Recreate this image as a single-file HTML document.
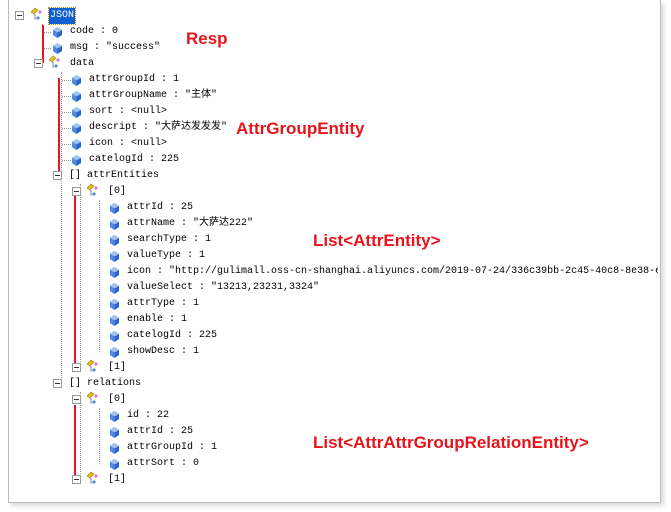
<!DOCTYPE html>
<html><head><meta charset="utf-8"><style>
body{margin:0;width:671px;height:512px;background:#fff;position:relative;overflow:hidden;font-family:"Liberation Mono","Noto Sans CJK SC",monospace;font-size:10px;color:#000}
.frame{position:absolute;left:8px;top:0;width:651px;height:502px;border:1px solid #bbb;border-top:none;box-shadow:3px 3px 4px #ddd}
.t{position:absolute;white-space:nowrap;line-height:16px;height:16px}
.ex{position:absolute;width:7px;height:7px;border:1px solid #999;background:#fff}
.ex:after{content:"";position:absolute;left:1px;top:3px;width:5px;height:1px;background:#333}
.lf{position:absolute;width:9px;height:11px}
.ob{position:absolute;width:14px;height:14px}
.vd{position:absolute;width:0;border-left:1px dotted #999}
.hd{position:absolute;height:0;border-top:1px dotted #999}
.red{position:absolute;background:#e8141c;width:2px}
.lab{position:absolute;color:#e8141c;font-family:"Liberation Sans",sans-serif;font-weight:bold;font-size:17px;white-space:nowrap}
</style></head><body>
<div class="frame"></div>
<svg width="0" height="0" style="position:absolute"><defs>
<g id="leaf"><polygon points="4.5,0 9,3 9,8 4.5,11 0,8 0,3" fill="#2a64c8"/><polygon points="4.5,0 9,3 4.5,5.5 0,3" fill="#9cc4f4"/><polygon points="0,3 4.5,5.5 4.5,11 0,8" fill="#4c8ae0"/></g>
<g id="obj"><polygon points="1,5 5,1 8,3 4,7" fill="#e8c020" stroke="#a08010" stroke-width=".6"/><polygon points="8,5 10,3 12,5 10,7" fill="#e070e0"/><polygon points="6,11 8,9 10,11 8,13" fill="#4c8ae0"/><path d="M5,7 V12 H6" stroke="#666" fill="none" stroke-width=".8"/></g>
</defs></svg>

<div class="vd" style="left:42px;top:24px;height:38px"></div>
<div class="hd" style="left:43px;top:32px;width:8px"></div>
<div class="hd" style="left:43px;top:48px;width:8px"></div>
<div class="vd" style="left:61px;top:72px;height:312px"></div>
<div class="hd" style="left:62px;top:80px;width:9px"></div><div class="hd" style="left:62px;top:96px;width:9px"></div><div class="hd" style="left:62px;top:112px;width:9px"></div><div class="hd" style="left:62px;top:128px;width:9px"></div><div class="hd" style="left:62px;top:144px;width:9px"></div><div class="hd" style="left:62px;top:160px;width:9px"></div>
<div class="vd" style="left:80px;top:184px;height:184px"></div>
<div class="vd" style="left:99px;top:200px;height:152px"></div>
<div class="vd" style="left:80px;top:392px;height:88px"></div>
<div class="vd" style="left:99px;top:408px;height:56px"></div>

<div class="red" style="left:42px;top:25px;height:38px"></div>
<div class="red" style="left:58px;top:78px;height:95px"></div>
<div class="red" style="left:74px;top:190px;height:180px"></div>
<div class="red" style="left:74px;top:405px;height:77px"></div>

<div class="ex" style="left:15px;top:11px"></div>
<svg class="ob" style="left:30px;top:7px" viewBox="0 0 14 14"><use href="#obj"/></svg>
<div class="t" style="left:49px;top:8px;background:#1060d0;color:#fff;outline:1px dotted #e08020;padding:0 1px">JSON</div>

<svg class="lf" style="left:53px;top:27px"><use href="#leaf"/></svg><div class="t" style="left:70px;top:24px">code : 0</div>
<svg class="lf" style="left:53px;top:43px"><use href="#leaf"/></svg><div class="t" style="left:70px;top:40px">msg : "success"</div>
<div class="ex" style="left:34px;top:59px"></div>
<svg class="ob" style="left:48px;top:55px" viewBox="0 0 14 14"><use href="#obj"/></svg><div class="t" style="left:70px;top:56px">data</div>

<svg class="lf" style="left:72px;top:75px"><use href="#leaf"/></svg><div class="t" style="left:89px;top:72px">attrGroupId : 1</div>
<svg class="lf" style="left:72px;top:91px"><use href="#leaf"/></svg><div class="t" style="left:89px;top:88px">attrGroupName : "主体"</div>
<svg class="lf" style="left:72px;top:107px"><use href="#leaf"/></svg><div class="t" style="left:89px;top:104px">sort : &lt;null&gt;</div>
<svg class="lf" style="left:72px;top:123px"><use href="#leaf"/></svg><div class="t" style="left:89px;top:120px">descript : "大萨达发发发"</div>
<svg class="lf" style="left:72px;top:139px"><use href="#leaf"/></svg><div class="t" style="left:89px;top:136px">icon : &lt;null&gt;</div>
<svg class="lf" style="left:72px;top:155px"><use href="#leaf"/></svg><div class="t" style="left:89px;top:152px">catelogId : 225</div>

<div class="ex" style="left:53px;top:171px"></div><div class="t" style="left:69px;top:168px">[] attrEntities</div>
<div class="ex" style="left:72px;top:187px"></div>
<svg class="ob" style="left:86px;top:183px" viewBox="0 0 14 14"><use href="#obj"/></svg><div class="t" style="left:108px;top:184px">[0]</div>

<svg class="lf" style="left:110px;top:203px"><use href="#leaf"/></svg><div class="t" style="left:127px;top:200px">attrId : 25</div>
<svg class="lf" style="left:110px;top:219px"><use href="#leaf"/></svg><div class="t" style="left:127px;top:216px">attrName : "大萨达222"</div>
<svg class="lf" style="left:110px;top:235px"><use href="#leaf"/></svg><div class="t" style="left:127px;top:232px">searchType : 1</div>
<svg class="lf" style="left:110px;top:251px"><use href="#leaf"/></svg><div class="t" style="left:127px;top:248px">valueType : 1</div>
<svg class="lf" style="left:110px;top:267px"><use href="#leaf"/></svg><div class="t" style="left:127px;top:264px;width:531px;overflow:hidden">icon : "http://gulimall.oss-cn-shanghai.aliyuncs.com/2019-07-24/336c39bb-2c45-40c8-8e38-e</div>
<svg class="lf" style="left:110px;top:283px"><use href="#leaf"/></svg><div class="t" style="left:127px;top:280px">valueSelect : "13213,23231,3324"</div>
<svg class="lf" style="left:110px;top:299px"><use href="#leaf"/></svg><div class="t" style="left:127px;top:296px">attrType : 1</div>
<svg class="lf" style="left:110px;top:315px"><use href="#leaf"/></svg><div class="t" style="left:127px;top:312px">enable : 1</div>
<svg class="lf" style="left:110px;top:331px"><use href="#leaf"/></svg><div class="t" style="left:127px;top:328px">catelogId : 225</div>
<svg class="lf" style="left:110px;top:347px"><use href="#leaf"/></svg><div class="t" style="left:127px;top:344px">showDesc : 1</div>

<div class="ex" style="left:72px;top:363px"></div>
<svg class="ob" style="left:86px;top:359px" viewBox="0 0 14 14"><use href="#obj"/></svg><div class="t" style="left:108px;top:360px">[1]</div>

<div class="ex" style="left:53px;top:379px"></div><div class="t" style="left:69px;top:376px">[] relations</div>
<div class="ex" style="left:72px;top:395px"></div>
<svg class="ob" style="left:86px;top:391px" viewBox="0 0 14 14"><use href="#obj"/></svg><div class="t" style="left:108px;top:392px">[0]</div>
<svg class="lf" style="left:110px;top:411px"><use href="#leaf"/></svg><div class="t" style="left:127px;top:408px">id : 22</div>
<svg class="lf" style="left:110px;top:427px"><use href="#leaf"/></svg><div class="t" style="left:127px;top:424px">attrId : 25</div>
<svg class="lf" style="left:110px;top:443px"><use href="#leaf"/></svg><div class="t" style="left:127px;top:440px">attrGroupId : 1</div>
<svg class="lf" style="left:110px;top:459px"><use href="#leaf"/></svg><div class="t" style="left:127px;top:456px">attrSort : 0</div>
<div class="ex" style="left:72px;top:475px"></div>
<svg class="ob" style="left:86px;top:471px" viewBox="0 0 14 14"><use href="#obj"/></svg><div class="t" style="left:108px;top:472px">[1]</div>

<div class="lab" style="left:186px;top:29px">Resp</div>
<div class="lab" style="left:236px;top:119px">AttrGroupEntity</div>
<div class="lab" style="left:313px;top:231px">List&lt;AttrEntity&gt;</div>
<div class="lab" style="left:313px;top:433px">List&lt;AttrAttrGroupRelationEntity&gt;</div>
</body></html>
